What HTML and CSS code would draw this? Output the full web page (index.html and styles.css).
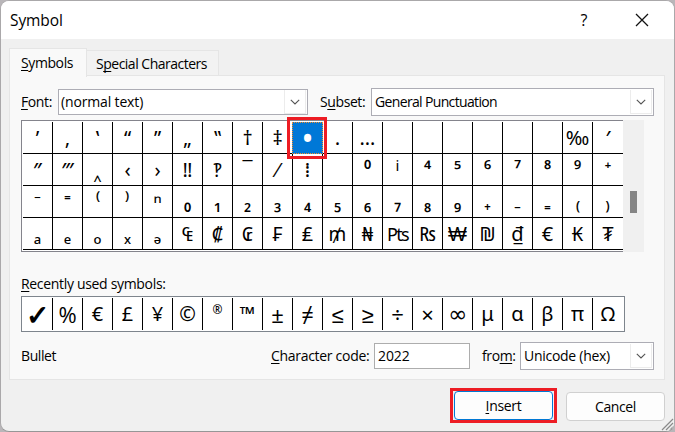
FILE: index.html
```html
<!DOCTYPE html>
<html lang="en">
<head>
<meta charset="utf-8">
<title>Symbol</title>
<link rel="stylesheet" href="styles.css">
</head>
<body>
<main class="dialog">
<header class="titlebar">
<h1>Symbol</h1>
<span class="help">?</span>
<svg class="close" width="14" height="14" viewBox="0 0 14 14"><path d="M1 1L13 13M13 1L1 13"/></svg>
</header>
<nav class="tabs">
<div class="tab active"><span class="t-tab1"><u>S</u>ymbols</span></div>
<div class="tab"><span class="t-tab2">S<u>p</u>ecial Characters</span></div>
</nav>
<section class="panel">
<div class="filters">
<label class="font-label"><u>F</u>ont:</label>
<div class="combo font-combo"><span class="t-font">(normal text)</span><i><svg width="10" height="6" viewBox="0 0 10 6"><path d="M.8.8L5 5L9.2.8"/></svg></i></div>
<label class="subset-label">S<u>u</u>bset:</label>
<div class="combo subset-combo"><span class="t-subset">General Punctuation</span><i><svg width="10" height="6" viewBox="0 0 10 6"><path d="M.8.8L5 5L9.2.8"/></svg></i></div>
</div>
<div class="symbols">
<div class="grid">
<b>’</b><b>‚</b><b>‛</b><b>“</b><b>”</b><b>„</b><b>‟</b><b>†</b><b>‡</b><b class="selected">•</b><b>․</b><b>…</b><b></b><b></b><b></b><b></b><b></b><b></b><b>‰</b><b class="semi">′</b>
<b class="semi">″</b><b class="semi">‴</b><b class="semi">‸</b><b>‹</b><b>›</b><b>‼</b><b>‽</b><b>‾</b><b>⁄</b><b>⁞</b><b></b><b class="semi">⁰</b><b class="sup-i">i</b><b class="semi">⁴</b><b class="semi">⁵</b><b class="semi">⁶</b><b class="semi">⁷</b><b class="semi">⁸</b><b class="semi">⁹</b><b class="semi">⁺</b>
<b class="semi">⁻</b><b class="semi">⁼</b><b class="semi">⁽</b><b class="semi">⁾</b><b class="semi">ⁿ</b><b class="semi">₀</b><b class="semi">₁</b><b class="semi">₂</b><b class="semi">₃</b><b class="semi">₄</b><b class="semi">₅</b><b class="semi">₆</b><b class="semi">₇</b><b class="semi">₈</b><b class="semi">₉</b><b class="semi">₊</b><b class="semi">₋</b><b class="semi">₌</b><b class="semi">₍</b><b class="semi">₎</b>
<b class="semi low">ₐ</b><b class="semi low">ₑ</b><b class="semi low">ₒ</b><b class="semi low">ₓ</b><b class="semi low">ₔ</b><b>₠</b><b>₡</b><b>₢</b><b>₣</b><b>₤</b><b class="mill">₥</b><b>₦</b><b class="peseta">Pts</b><b>₨</b><b class="won">₩</b><b>₪</b><b>₫</b><b>€</b><b>₭</b><b>₮</b>
</div>
<div class="scrollbar"><div class="thumb"></div></div>
</div>
<label class="recent-label"><u>R</u>ecently used symbols:</label>
<div class="recent"><b class="check">✓</b><b class="percent">%</b><b>€</b><b>£</b><b>¥</b><b class="copy">©</b><b class="reg">®</b><b class="tm">™</b><b class="math">±</b><b class="math">≠</b><b class="math">≤</b><b class="math">≥</b><b class="math">÷</b><b class="math">×</b><b class="inf">∞</b><b>μ</b><b>α</b><b>β</b><b>π</b><b>Ω</b></div>
<div class="details">
<span class="name">Bullet</span>
<label class="code-label"><u>C</u>haracter code:</label>
<div class="code">2022</div>
<label class="from-label">fro<u>m</u>:</label>
<div class="combo from-combo"><span class="t-from">Unicode (hex)</span><i><svg width="10" height="6" viewBox="0 0 10 6"><path d="M.8.8L5 5L9.2.8"/></svg></i></div>
</div>
</section>
<footer class="actions">
<div class="callout"><button class="primary"><u>I</u>nsert</button></div>
<button class="cancel">Cancel</button>
</footer>
<svg class="grip" width="13" height="13" viewBox="0 0 13 13"><path class="fill" d="M0 13L13 0V13Z"/><path d="M1 12L12 1M5 12L12 5M9 12L12 9"/></svg>
</main>
</body>
</html>
```
FILE: styles.css
```css
* { box-sizing: border-box; }
body {
  margin: 0; width: 675px; height: 432px; overflow: hidden;
  background: linear-gradient(#b9b6b9 0 102px, #1d1a1b 102px 134px, #b9b6b9 134px);
  font: 14px/20px "Open Sans", "Noto Sans", sans-serif; letter-spacing: -.4px; color: #000;
}
u { text-decoration-thickness: 1px; text-underline-offset: 2px; text-decoration-skip-ink: none; }
.dialog {
  position: relative; width: 675px; height: 432px; overflow: hidden;
  border: 1px solid #aaa8aa; border-bottom-color: #969696; border-radius: 9px; background: #f0f0f0;
}
.titlebar { height: 38px; background: #fff; display: flex; align-items: center; padding: 0 25px 0 9px; }
h1 { margin: 0; flex: 1; font-size: 15.5px; font-weight: 400; letter-spacing: -.1px; }
.help { font-size: 16px; margin-right: 48px; }
.close { fill: none; stroke: #111; stroke-width: 1.3; }
.tabs { display: flex; align-items: flex-end; height: 37px; padding-left: 8px; position: relative; z-index: 1; }
.tab { height: 26px; width: 132px; padding: 3px 0 0 9px; border: 1px solid #e5e5e5; border-left: 0; background: #f2f2f2; }
.tab.active { width: 78px; height: 29px; margin-bottom: -1px; padding: 4px 0 0 11px; border-left: 1px solid #e5e5e5; border-bottom: 0; background: #f9f9f9; }
.t-tab2 { letter-spacing: -.5px; }
.panel { width: 656px; height: 305px; margin: -1px 0 0 8px; padding: 12px 0 0 11px; border: 1px solid #e5e5e5; background: #f9f9f9; }
.filters { display: flex; align-items: center; height: 28px; }
.font-label { width: 37px; }
.combo { display: flex; align-items: center; justify-content: space-between; height: 28px; border: 1px solid #adadb5; background: #fff; padding: 0 1px 0 3px; white-space: nowrap; }
.combo i { width: 22px; height: 24px; border: 1px solid #ececec; border-width: 0 1px 1px 1px; display: flex; align-items: center; justify-content: center; }
.combo svg { fill: none; stroke: #555; stroke-width: 1.1; }
.t-font { letter-spacing: -.15px; }
.t-subset { letter-spacing: -.65px; }
.t-from { letter-spacing: -.28px; }
.font-combo { width: 250px; height: 26px; padding-left: 2px; }
.subset-label { width: 63px; padding-left: 12px; }
.subset-combo { width: 283px; }
.symbols { display: flex; margin-top: 4px; height: 132px; }
.grid { width: 602px; height: 132px; border: 1px solid #84848c; border-right: 0; padding: 1px 0 0 1px; background: #fff; display: grid; grid-template-columns: repeat(20, 30px); grid-auto-rows: 32px; }
b { display: flex; align-items: center; justify-content: center; border: 0 solid #000; border-width: 0 1px 1px 0; font-family: "Noto Sans", sans-serif; font-weight: 400; font-size: 20px; line-height: 30px; letter-spacing: 0; white-space: nowrap; min-width: 0; min-height: 0; }
.grid b:nth-child(20n) { border-right: 0; }
.semi { font-weight: 500; }
.low { padding-top: 3px; }
.sup-i { font-size: 15px; padding-bottom: 9px; }
.mill { font-size: 19px; }
.peseta { font-size: 18px; letter-spacing: -1.6px; }
.won { font-family: "Liberation Sans", sans-serif; }
.grid .selected { position: relative; background: #0078d7; color: #fff; border: 1px dotted #f7902a; margin: 0 0 0 -1px; font-size: 32px; line-height: 20px; }
.selected::after { content: ""; position: absolute; inset: -6px -5px -6px -6px; border: 3px solid #ed1c24; }
.scrollbar { width: 21px; background: #f0f0f0; padding: 71px 0 0 7px; }
.thumb { width: 7px; height: 22px; background: #858585; }
.recent-label { display: block; height: 20px; margin-top: 22px; letter-spacing: -.32px; }
.recent { width: 604px; height: 36px; margin-top: 2px; border: 1px solid #7e858d; background: #fff; display: grid; grid-template-columns: repeat(20, 30px); grid-template-rows: 32px; padding: 1px; }
.recent b { border-bottom: 0; }
.recent b:last-child { border: 0; }
.recent .check { font-size: 28px; font-weight: 700; }
.recent .percent { font-size: 22px; font-family: "Open Sans", sans-serif; }
.recent .copy { font-size: 20px; }
.recent .reg { font-size: 12px; padding-bottom: 9px; font-weight: 500; }
.recent .tm { font-weight: 500; }
.recent .math { font-size: 22px; }
.recent .inf { font-family: "DejaVu Sans", sans-serif; font-size: 23px; }
.details { display: flex; align-items: center; height: 28px; margin-top: 10px; }
.name { width: 250px; }
.code-label { width: 103px; letter-spacing: -.3px; }
.code { width: 96px; height: 26px; border: 1px solid #adadad; background: #fff; padding: 2px 3px; letter-spacing: -.1px; }
.from-label { width: 50px; padding-left: 12px; }
.from-combo { width: 134px; }
.actions { display: flex; margin-top: 8px; padding-left: 449px; }
.callout { width: 107px; height: 35px; border: 3px solid #ed1c24; }
button { display: block; font: inherit; letter-spacing: inherit; color: #000; background: #fdfdfd; border: 1px solid #d0d0d0; border-radius: 4px; height: 29px; padding: 0; width: 99px; }
.primary { margin: 0 0 0 1px; border-color: #0078d4; letter-spacing: -.3px; }
.cancel { margin: 4px 0 0 9px; }
.grip { position: absolute; right: 0; bottom: 0; fill: none; stroke: #8a8a8a; stroke-width: 1.2; }
.grip .fill { fill: #f0f0f0; stroke: none; }
```
